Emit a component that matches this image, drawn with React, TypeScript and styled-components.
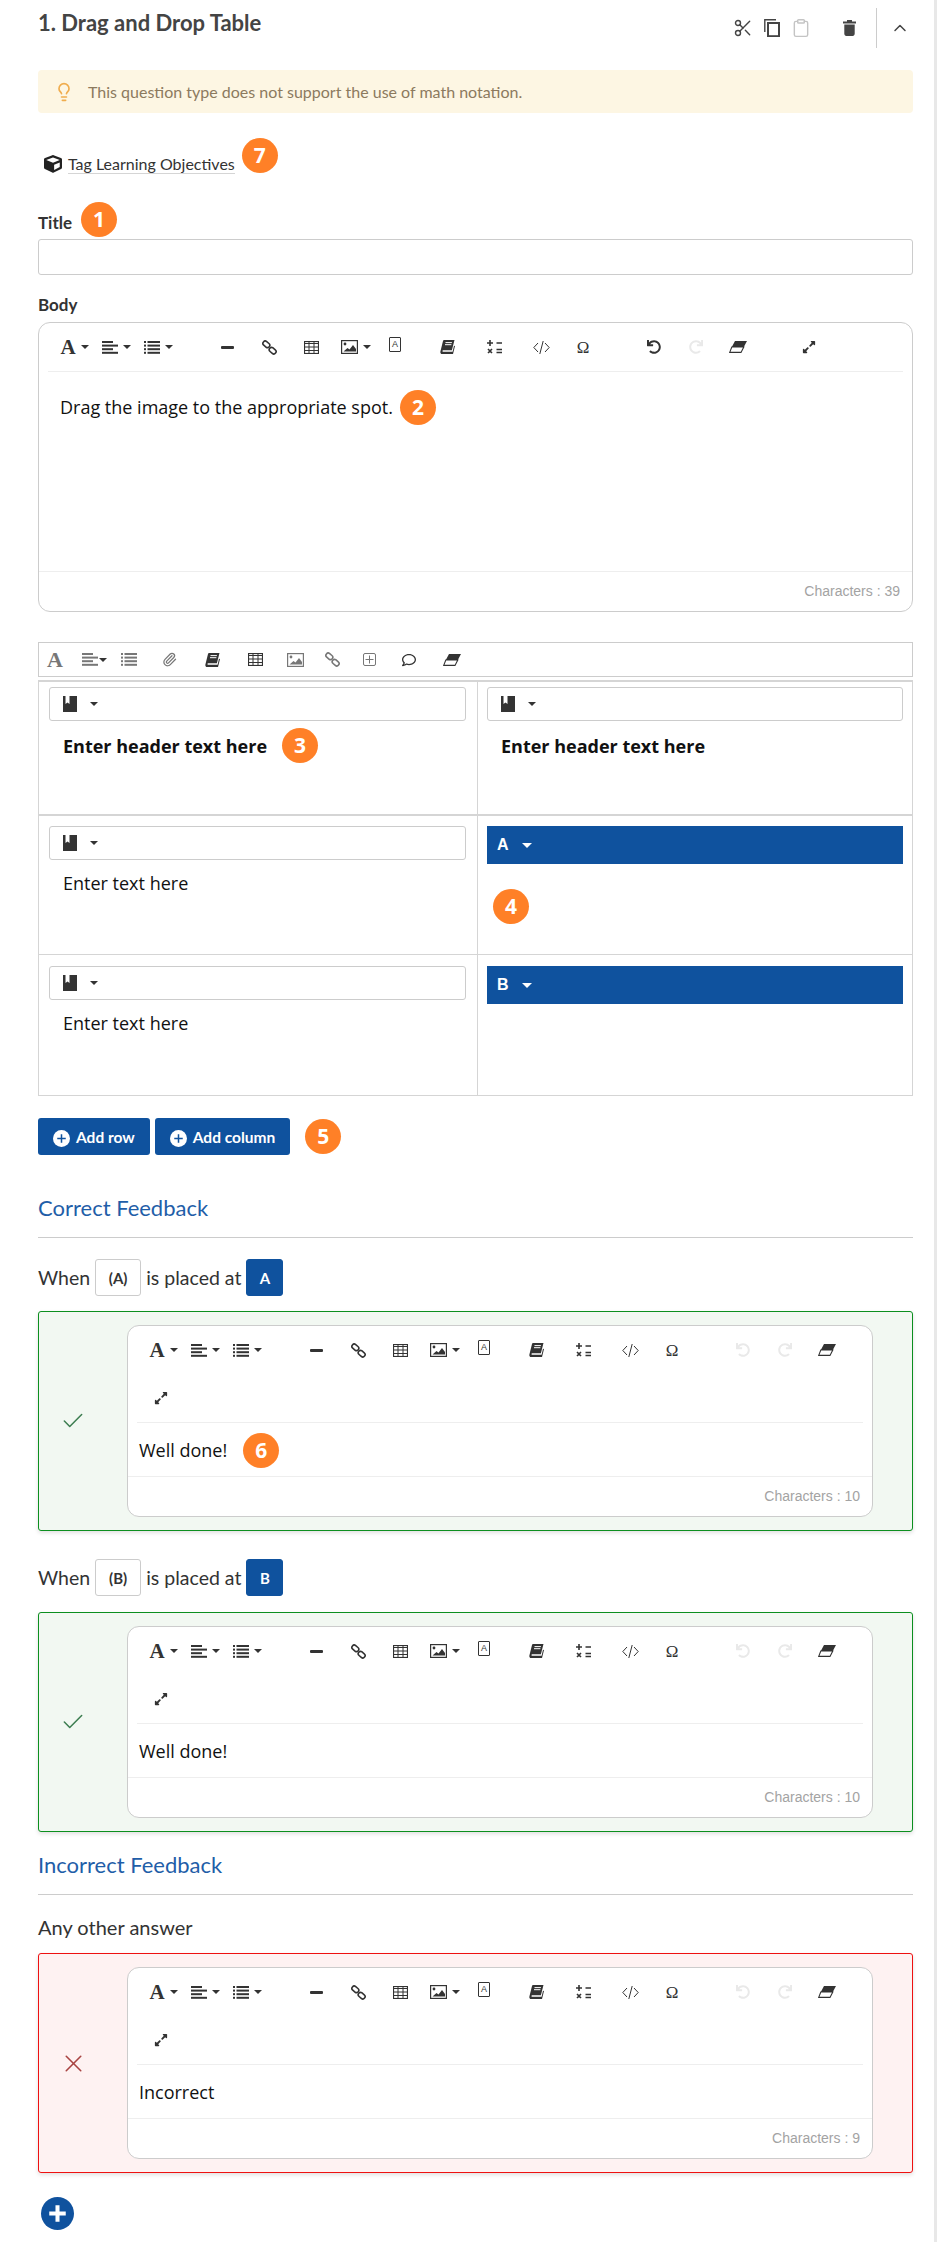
import * as React from "react"
import styled, { createGlobalStyle } from "styled-components"
import { Check, ChevronUp, Clipboard, Lightbulb, Paperclip, Scissors, X } from "lucide-react"
import { FaCube, FaExpandAlt, FaRedo, FaRegComment, FaUndo } from "react-icons/fa"

const blue = "#0f529e"
const sans = `"Lato", "Liberation Sans", sans-serif`
const body = `"Open Sans", "Noto Sans", sans-serif`

const GlobalStyle = createGlobalStyle`
  html, body {
    margin: 0;
    background: #fff;
  }
`

const Page = styled.div`
  box-sizing: border-box;
  width: 937px;
  min-height: 2242px;
  padding: 0 21px 0 38px;
  border-right: 3px solid #e8e8e8;
  font-family: ${sans};
  color: #333;
`

const Header = styled.header`
  display: flex;
  height: 70px;
`

const QuestionTitle = styled.h2`
  flex: 1;
  margin: 0;
  padding-top: 11px;
  font-size: 22px;
  line-height: 24px;
  font-weight: 700;
  color: #444;
`

const HeaderTools = styled.div`
  display: flex;
  align-items: center;
  height: 40px;
  margin: 8px 3px 0 0;
  color: #444;
`

const HeaderTool = styled.span<{ $w: number; $muted?: boolean; $after?: number }>`
  display: flex;
  justify-content: center;
  width: ${p => p.$w}px;
  margin-right: ${p => p.$after ?? 0}px;
  color: ${p => (p.$muted ? "#c4c4c4" : "#444")};
`

const HeaderDivider = styled.span`
  width: 1px;
  height: 40px;
  margin: 0 13px 0 15px;
  background: #ccc;
`

const Alert = styled.div`
  display: flex;
  align-items: center;
  height: 43px;
  padding-left: 16px;
  gap: 14px;
  border-radius: 4px;
  background: #fdf6e3;
  color: #8c7a5e;
  font-size: 16px;
  svg {
    color: #f0ad4e;
  }
`

const TagRow = styled.div`
  display: flex;
  align-items: center;
  height: 36px;
  margin-top: 24px;
  padding-left: 6px;
  > svg {
    margin-top: 18px;
  }
`

const TagLink = styled.span`
  margin: 18px 0 0 6px;
  font-size: 16px;
  line-height: 19px;
  border-bottom: 1px solid #d5d5d5;
`

const Badge = styled.span<{ $left?: number }>`
  display: inline-flex;
  flex: none;
  align-items: center;
  justify-content: center;
  width: 36px;
  height: 35px;
  margin-left: ${p => p.$left ?? 5}px;
  border-radius: 50%;
  background: #ff8027;
  color: #fff;
  font-family: ${body};
  font-size: 21px;
  font-weight: 700;
  line-height: 1;
`

const LabelRow = styled.div`
  display: flex;
  align-items: center;
  height: 35px;
  margin-top: 29px;
`

const Label = styled.label`
  font-size: 17px;
  font-weight: 700;
  margin-top: 5px;
`

const BodyLabel = styled(Label)`
  display: block;
  height: 17px;
  margin: 21px 0 0;
  line-height: 17px;
`

const TitleInput = styled.div`
  box-sizing: border-box;
  height: 36px;
  margin-top: 2px;
  border: 1px solid #ccc;
  border-radius: 3px;
  background: #fff;
`

const Editor = styled.div<{ $spaced?: boolean }>`
  flex: 1;
  min-width: 0;
  margin-top: ${p => (p.$spaced ? 9 : 0)}px;
  border: 1px solid #ccc;
  border-radius: 12px;
  background: #fff;
`

const EditorTools = styled.div`
  display: flex;
  flex-wrap: wrap;
  margin: 0 9px;
  padding-left: 3px;
  border-bottom: 1px solid #eee;
`

const ToolCell = styled.span<{ $gap?: number; $off?: boolean; $caret?: boolean }>`
  display: flex;
  align-items: center;
  justify-content: center;
  gap: 5px;
  box-sizing: border-box;
  width: 42px;
  height: 48px;
  margin-left: ${p => p.$gap ?? 0}px;
  padding-left: ${p => (p.$caret ? 5 : 0)}px;
  color: ${p => (p.$off ? "#e9e9e9" : "#333")};
`

const SerifA = styled.span<{ $size?: number }>`
  font-family: "Liberation Serif", serif;
  font-size: ${p => p.$size ?? 21}px;
  font-weight: 700;
  line-height: 1;
`

const Omega = styled.span`
  font-family: "Liberation Serif", serif;
  font-size: 17px;
  line-height: 1;
`

const BoxedA = styled.span`
  display: block;
  box-sizing: border-box;
  width: 12px;
  height: 15px;
  margin-top: -6px;
  border: 1.5px solid #333;
  border-radius: 1px;
  font-family: "Liberation Sans", sans-serif;
  font-size: 9px;
  line-height: 12px;
  text-align: center;
`

const Caret = styled.i<{ $light?: boolean; $size?: number }>`
  display: inline-block;
  flex: none;
  width: 0;
  height: 0;
  border-left: ${p => p.$size ?? 4}px solid transparent;
  border-right: ${p => p.$size ?? 4}px solid transparent;
  border-top: ${p => p.$size ?? 4}px solid ${p => (p.$light ? "#fff" : "#333")};
`

const EditorText = styled.div<{ $tall?: boolean }>`
  display: flex;
  align-items: flex-start;
  box-sizing: border-box;
  height: ${p => (p.$tall ? 199 : 53)}px;
  padding: ${p => (p.$tall ? "18px 0 0 21px" : "10px 0 0 11px")};
  font-family: ${body};
  font-size: 18px;
  line-height: 35px;
  color: #111;
`

const EditorFooter = styled.div`
  box-sizing: border-box;
  height: 40px;
  padding-right: 12px;
  border-top: 1px solid #eee;
  color: #a3a3a3;
  font-family: "Liberation Sans", sans-serif;
  font-size: 14px;
  line-height: 38px;
  text-align: right;
`

const TableTools = styled.div`
  display: flex;
  box-sizing: border-box;
  height: 35px;
  margin-top: 30px;
  border: 1px solid #ccc;
`

const TableTool = styled.span<{ $w: number; $grey?: boolean }>`
  display: flex;
  align-items: center;
  justify-content: center;
  gap: 1px;
  width: ${p => p.$w}px;
  color: ${p => (p.$grey ? "#777" : "#333")};
`

const Table = styled.div`
  margin-top: 3px;
  border: 1px solid #d5d5d5;
  border-width: 2px 1px 1px;
`

const TableRow = styled.div<{ $h: number; $thick?: boolean }>`
  display: grid;
  grid-template-columns: 438px 1fr;
  height: ${p => p.$h}px;
  border-bottom: ${p => (p.$thick ? 2 : 1)}px solid #d5d5d5;
  &:last-child {
    border-bottom: 0;
  }
`

const TableCell = styled.div<{ $top: number; $second?: boolean }>`
  box-sizing: border-box;
  padding: ${p => p.$top}px ${p => (p.$second ? "9px 0 9px" : "11px 0 10px")};
  border-left: ${p => (p.$second ? "1px solid #d5d5d5" : "0")};
`

const BookSelect = styled.div`
  display: flex;
  align-items: center;
  gap: 13px;
  box-sizing: border-box;
  height: 34px;
  padding-left: 13px;
  border: 1px solid #ccc;
  border-radius: 3px;
`

const BlankSelect = styled.div`
  display: flex;
  align-items: center;
  gap: 13px;
  box-sizing: border-box;
  height: 38px;
  padding-left: 10px;
  background: ${blue};
  color: #fff;
  font-family: "Liberation Sans", sans-serif;
  font-size: 16px;
  font-weight: 700;
`

const CellText = styled.div<{ $bold?: boolean }>`
  display: flex;
  align-items: center;
  height: 35px;
  margin-top: ${p => (p.$bold ? 7 : 5)}px;
  padding-left: 14px;
  font-family: ${body};
  font-size: 18px;
  font-weight: ${p => (p.$bold ? 700 : 400)};
  color: #111;
`

const BlankBadge = styled(Badge)`
  margin: 25px 0 0 6px;
`

const ButtonRow = styled.div`
  display: flex;
  align-items: center;
  gap: 5px;
  margin-top: 22px;
`

const AddButton = styled.button`
  display: flex;
  align-items: center;
  gap: 6px;
  height: 37px;
  padding: 0 15px;
  border: 0;
  border-radius: 3px;
  background: ${blue};
  color: #fff;
  font-family: ${sans};
  font-size: 15.5px;
  font-weight: 700;
  svg {
    margin-top: 4px;
  }
`

const SectionTitle = styled.h3<{ $top: number }>`
  margin: ${p => p.$top}px 0 0;
  padding-bottom: 15px;
  border-bottom: 1px solid #ccc;
  color: #1f5ea8;
  font-size: 22px;
  font-weight: 400;
  line-height: 28px;
`

const WhenRow = styled.div<{ $top: number }>`
  display: flex;
  align-items: center;
  gap: 5px;
  height: 37px;
  margin-top: ${p => p.$top}px;
  font-size: 19.5px;
`

const Chip = styled.span<{ $filled?: boolean }>`
  display: flex;
  align-items: center;
  justify-content: center;
  box-sizing: border-box;
  width: ${p => (p.$filled ? 37 : 46)}px;
  height: 37px;
  border: 1px solid ${p => (p.$filled ? blue : "#ccc")};
  border-radius: 3px;
  background: ${p => (p.$filled ? blue : "#fff")};
  color: ${p => (p.$filled ? "#fff" : "#333")};
  font-size: 15px;
  font-weight: 700;
`

const FeedbackCard = styled.div<{ $wrong?: boolean; $top: number }>`
  display: flex;
  box-sizing: border-box;
  height: 220px;
  margin-top: ${p => p.$top}px;
  padding: 13px 39px 13px 0;
  border: 1px solid ${p => (p.$wrong ? "#ee1111" : "#0c8f1f")};
  border-radius: 3px;
  background: ${p => (p.$wrong ? "#fef2f2" : "#f2f8f2")};
  box-shadow: 0 2px 4px rgba(0, 0, 0, 0.12);
`

const Mark = styled.div<{ $wrong?: boolean }>`
  display: flex;
  flex: none;
  align-items: center;
  justify-content: center;
  width: 68px;
  margin-right: 20px;
  color: ${p => (p.$wrong ? "#a94442" : "#3c7d50")};
`

const OtherAnswer = styled.div`
  margin-top: 20px;
  font-size: 20px;
  line-height: 24px;
`

const RoundPlus = styled.div`
  display: flex;
  width: 33px;
  height: 33px;
  margin: 24px 0 0 3px;
`

const AlignIcon = () => (
  <svg width="16" height="13" viewBox="0 0 16 13" fill="currentColor">
    <rect width="11" height="2" />
    <rect y="3.6" width="16" height="2" />
    <rect y="7.2" width="11" height="2" />
    <rect y="10.8" width="16" height="2" />
  </svg>
)

const ListIcon = () => (
  <svg width="16" height="13" viewBox="0 0 16 13" fill="currentColor">
    {[0, 3.6, 7.2, 10.8].map(y => (
      <React.Fragment key={y}>
        <rect y={y} width="2" height="2" />
        <rect x="3.5" y={y} width="12.5" height="2" />
      </React.Fragment>
    ))}
  </svg>
)

const RuleIcon = () => (
  <svg width="13" height="3" viewBox="0 0 13 3" fill="currentColor">
    <rect width="13" height="3" rx="1" />
  </svg>
)

const LinkIcon = () => (
  <svg width="15" height="15" viewBox="0 0 15 15" fill="none" stroke="currentColor" strokeWidth="1.6">
    <rect x="0.6" y="2" width="7.5" height="4.6" rx="2.3" transform="rotate(40 4.3 4.3)" />
    <rect x="6.9" y="8.4" width="7.5" height="4.6" rx="2.3" transform="rotate(40 10.7 10.7)" />
  </svg>
)

const GridIcon = () => (
  <svg width="15" height="13" viewBox="0 0 15 13" fill="none" stroke="currentColor" strokeWidth="1">
    <rect x="0.5" y="0.5" width="14" height="12" strokeWidth="1.2" />
    <path d="M0 2.5h15M0 6h15M0 9.5h15M5 0v13M10 0v13" />
  </svg>
)

const ImageIcon = () => (
  <svg width="17" height="14" viewBox="0 0 17 14" fill="currentColor">
    <rect x="0.6" y="0.6" width="15.8" height="12.8" fill="none" stroke="currentColor" strokeWidth="1.2" />
    <circle cx="4" cy="4" r="1.4" />
    <path d="M2.5 11.5 6.5 8l2 1.5L12 5l3 4v2.5z" />
  </svg>
)

const BookIcon = () => (
  <svg width="15" height="14" viewBox="0 0 15 14" fill="currentColor">
    <path d="M4 0h10.5l-2.6 10.2H3.2c-.9 0-1.2 1.5 0 1.5h9.4l1.4-6 1 .4-2 7.9H2.2C.7 14 .1 12.7.4 11.4L3 1c.2-.6.5-1 1-1z" />
    <path d="M5.5 2.6h6.4M5 4.7h6.4" stroke="#fff" strokeWidth="1" />
  </svg>
)

const MathIcon = () => (
  <svg width="15" height="14" viewBox="0 0 15 14" fill="none" stroke="currentColor" strokeWidth="1.6">
    <path d="M0 3h6M3 0v6M9.5 3H15M1 9l4 4M5 9l-4 4M9.5 9.5H15M9.5 12.5H15" />
  </svg>
)

const CodeIcon = () => (
  <svg width="17" height="13" viewBox="0 0 17 13" fill="none" stroke="currentColor" strokeWidth="1">
    <path d="M5 2 .8 6.5 5 11M12 2l4.2 4.5L12 11M10.2 0 6.8 13" />
  </svg>
)

const EraserIcon = () => (
  <svg width="18" height="12" viewBox="0 0 18 12" fill="currentColor">
    <path d="M6 0h12l-3.2 6H2.8z" />
    <path d="M2.8 6h12L12 11.4H.7z" fill="#fff" stroke="currentColor" strokeWidth="1.1" />
  </svg>
)

const PlusSquareIcon = () => (
  <svg width="13" height="13" viewBox="0 0 13 13" fill="none" stroke="currentColor" strokeWidth="1">
    <rect x="0.5" y="0.5" width="12" height="12" rx="1.5" />
    <path d="M6.5 2.5v8M2.5 6.5h8" />
  </svg>
)

const CopyIcon = () => (
  <svg width="16" height="18" viewBox="0 0 16 18" fill="none" stroke="currentColor">
    <path d="M12 .8H.8V13" strokeWidth="1.4" />
    <rect x="4" y="4" width="11" height="13.2" strokeWidth="2" />
  </svg>
)

const TrashIcon = () => (
  <svg width="13" height="16" viewBox="0 0 13 16" fill="currentColor">
    <path d="M0 1.6h4V0h5v1.6h4v2H0zM1.3 4.6h10.4v9.2c0 1.2-.8 2.2-2 2.2H3.3c-1.2 0-2-1-2-2.2z" />
  </svg>
)

const SelectBook = () => (
  <svg width="14" height="16" viewBox="0 0 14 16" fill="#333">
    <path d="M0 0h14v16H0z" />
    <path d="M2.5 0h4v8L4.5 6.6 2.5 8z" fill="#fff" />
  </svg>
)

const CirclePlus = ({ size, fg, bg, weight }: { size: number; fg: string; bg: string; weight: number }) => (
  <svg width={size} height={size} viewBox="0 0 18 18">
    <circle cx="9" cy="9" r="9" fill={bg} />
    <path d="M9 4.5v9M4.5 9h9" stroke={fg} strokeWidth={weight} />
  </svg>
)

function Toolbar({ compact, undoOn }: { compact?: boolean; undoOn?: boolean }) {
  return (
    <EditorTools>
      <ToolCell $caret><SerifA>A</SerifA><Caret /></ToolCell>
      <ToolCell $caret><AlignIcon /><Caret /></ToolCell>
      <ToolCell $caret><ListIcon /><Caret /></ToolCell>
      <ToolCell $gap={29}><RuleIcon /></ToolCell>
      <ToolCell><LinkIcon /></ToolCell>
      <ToolCell><GridIcon /></ToolCell>
      <ToolCell $caret><ImageIcon /><Caret /></ToolCell>
      <ToolCell><BoxedA>A</BoxedA></ToolCell>
      <ToolCell $gap={10}><BookIcon /></ToolCell>
      <ToolCell $gap={5}><MathIcon /></ToolCell>
      <ToolCell $gap={5}><CodeIcon /></ToolCell>
      <ToolCell><Omega>Ω</Omega></ToolCell>
      <ToolCell $gap={29} $off={!undoOn}><FaUndo size={14} /></ToolCell>
      <ToolCell $off><FaRedo size={14} /></ToolCell>
      <ToolCell><EraserIcon /></ToolCell>
      <ToolCell $gap={compact ? 0 : 29}><FaExpandAlt size={14} /></ToolCell>
    </EditorTools>
  )
}

function Feedback(
  { text, count, wrong, top, badge }: {
    text: string
    count: number
    wrong?: boolean
    top: number
    badge?: string
  },
) {
  return (
    <FeedbackCard $wrong={wrong} $top={top}>
      <Mark $wrong={wrong}>
        {wrong ? <X size={29} strokeWidth={1.3} /> : <Check size={26} strokeWidth={1.4} />}
      </Mark>
      <Editor>
        <Toolbar compact />
        <EditorText>
          {text}
          {badge ? <Badge $left={16}>{badge}</Badge> : null}
        </EditorText>
        <EditorFooter>Characters : {count}</EditorFooter>
      </Editor>
    </FeedbackCard>
  )
}

export default function App() {
  return (
    <Page>
      <GlobalStyle />
      <Header>
        <QuestionTitle>1. Drag and Drop Table</QuestionTitle>
        <HeaderTools>
          <HeaderTool $w={28}><Scissors size={20} strokeWidth={1.7} /></HeaderTool>
          <HeaderTool $w={29}><CopyIcon /></HeaderTool>
          <HeaderTool $w={29} $muted $after={22}><Clipboard size={20} strokeWidth={1.7} /></HeaderTool>
          <HeaderTool $w={24}><TrashIcon /></HeaderTool>
          <HeaderDivider />
          <ChevronUp size={20} strokeWidth={1.8} />
        </HeaderTools>
      </Header>

      <Alert>
        <Lightbulb size={20} strokeWidth={2} />
        This question type does not support the use of math notation.
      </Alert>

      <TagRow>
        <FaCube size={18} color="#222" />
        <TagLink>Tag Learning Objectives</TagLink>
        <Badge $left={7}>7</Badge>
      </TagRow>

      <LabelRow>
        <Label>Title</Label>
        <Badge $left={9}>1</Badge>
      </LabelRow>
      <TitleInput />

      <BodyLabel>Body</BodyLabel>
      <Editor $spaced>
        <Toolbar undoOn />
        <EditorText $tall>
          Drag the image to the appropriate spot.
          <Badge $left={7}>2</Badge>
        </EditorText>
        <EditorFooter>Characters : 39</EditorFooter>
      </Editor>

      <TableTools>
        <TableTool $w={32} $grey><SerifA $size={22}>A</SerifA></TableTool>
        <TableTool $w={46} $grey><AlignIcon /><Caret $size={4} /></TableTool>
        <TableTool $w={24} $grey><ListIcon /></TableTool>
        <TableTool $w={56} $grey><Paperclip size={15} /></TableTool>
        <TableTool $w={30}><BookIcon /></TableTool>
        <TableTool $w={56}><GridIcon /></TableTool>
        <TableTool $w={24} $grey><ImageIcon /></TableTool>
        <TableTool $w={50} $grey><LinkIcon /></TableTool>
        <TableTool $w={24} $grey><PlusSquareIcon /></TableTool>
        <TableTool $w={56}><FaRegComment size={14} /></TableTool>
        <TableTool $w={30}><EraserIcon /></TableTool>
      </TableTools>

      <Table>
        <TableRow $h={132} $thick>
          <TableCell $top={5}>
            <BookSelect><SelectBook /><Caret $size={4.5} /></BookSelect>
            <CellText $bold>Enter header text here<Badge $left={15}>3</Badge></CellText>
          </TableCell>
          <TableCell $top={5} $second>
            <BookSelect><SelectBook /><Caret $size={4.5} /></BookSelect>
            <CellText $bold>Enter header text here</CellText>
          </TableCell>
        </TableRow>
        <TableRow $h={138}>
          <TableCell $top={10}>
            <BookSelect><SelectBook /><Caret $size={4.5} /></BookSelect>
            <CellText>Enter text here</CellText>
          </TableCell>
          <TableCell $top={10} $second>
            <BlankSelect>A<Caret $light $size={5} /></BlankSelect>
            <BlankBadge>4</BlankBadge>
          </TableCell>
        </TableRow>
        <TableRow $h={140}>
          <TableCell $top={11}>
            <BookSelect><SelectBook /><Caret $size={4.5} /></BookSelect>
            <CellText>Enter text here</CellText>
          </TableCell>
          <TableCell $top={11} $second>
            <BlankSelect>B<Caret $light $size={5} /></BlankSelect>
          </TableCell>
        </TableRow>
      </Table>

      <ButtonRow>
        <AddButton><CirclePlus size={17} fg={blue} bg="#fff" weight={1.6} />Add row</AddButton>
        <AddButton><CirclePlus size={17} fg={blue} bg="#fff" weight={1.6} />Add column</AddButton>
        <Badge $left={10}>5</Badge>
      </ButtonRow>

      <SectionTitle $top={39}>Correct Feedback</SectionTitle>
      <WhenRow $top={21}>When <Chip>(A)</Chip> is placed at <Chip $filled>A</Chip></WhenRow>
      <Feedback text="Well done!" count={10} top={15} badge="6" />
      <WhenRow $top={28}>When <Chip>(B)</Chip> is placed at <Chip $filled>B</Chip></WhenRow>
      <Feedback text="Well done!" count={10} top={16} />

      <SectionTitle $top={19}>Incorrect Feedback</SectionTitle>
      <OtherAnswer>Any other answer</OtherAnswer>
      <Feedback text="Incorrect" count={9} top={14} wrong />

      <RoundPlus><CirclePlus size={33} fg="#fff" bg={blue} weight={2.2} /></RoundPlus>
    </Page>
  )
}
